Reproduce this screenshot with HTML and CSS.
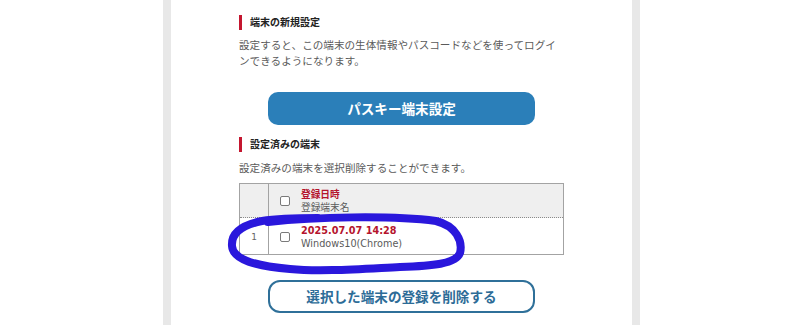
FILE: index.html
```html
<!DOCTYPE html>
<html lang="ja">
<head>
<meta charset="utf-8">
<title>パスキー端末設定</title>
<link rel="stylesheet" href="styles.css">
</head>
<body>
<div class="page">
  <main class="panel">
    <h2 class="heading">端末の新規設定</h2>
    <p class="desc">設定すると、この端末の生体情報やパスコードなどを使ってログインできるようになります。</p>
    <button class="btn btn-primary" type="button">パスキー端末設定</button>

    <h2 class="heading heading-second">設定済みの端末</h2>
    <p class="desc desc-second">設定済みの端末を選択削除することができます。</p>
    <table class="devices">
      <thead>
        <tr>
          <th class="num"></th>
          <th class="info">
            <div class="info-inner">
              <span class="cb"></span>
              <div class="lines">
                <span class="date">登録日時</span>
                <span class="name">登録端末名</span>
              </div>
            </div>
          </th>
        </tr>
      </thead>
      <tbody>
        <tr>
          <td class="num">1</td>
          <td class="info">
            <div class="info-inner">
              <span class="cb"></span>
              <div class="lines">
                <span class="date">2025.07.07 14:28</span>
                <span class="name">Windows10(Chrome)</span>
              </div>
            </div>
          </td>
        </tr>
      </tbody>
    </table>
    <button class="btn btn-outline" type="button">選択した端末の登録を削除する</button>
  </main>
  <svg class="annotation" viewBox="0 0 800 325" width="800" height="325" aria-hidden="true">
    <path d="M 268 222 C 315 217, 390 215, 436 221 C 456 226, 463 241, 460 253 C 456 264, 432 266, 400 267 C 360 269, 320 272, 290 269 C 256 266, 233 260, 232 246 C 231 233, 242 225, 262 221 C 280 218, 300 218, 318 218" />
  </svg>
</div>
</body>
</html>
```

FILE: styles.css
```css
* {
  box-sizing: border-box;
}

html, body {
  margin: 0;
  padding: 0;
  background: #ffffff;
}

body {
  font-family: "DejaVu Sans", "Noto Sans CJK JP", sans-serif;
  color: #333333;
  height: 325px;
  overflow: hidden;
}

.page {
  position: relative;
  width: 800px;
  height: 325px;
}

.panel {
  margin-left: 163px;
  width: 477px;
  height: 325px;
  border-left: 8px solid #e8e8e8;
  border-right: 8px solid #e8e8e8;
  background: #ffffff;
  padding: 15px 68px 0 68px;
  display: flex;
  flex-direction: column;
}

.heading {
  margin: 0;
  height: 15px;
  line-height: 15px;
  font-size: 10px;
  font-weight: bold;
  color: #222222;
  border-left: 3px solid #c4162f;
  padding-left: 8px;
}

.heading-second {
  margin-top: 12px;
}

.desc {
  margin: 7px 0 0 0;
  font-size: 10.6px;
  line-height: 16px;
  color: #5a5a5a;
  font-family: "Noto Sans CJK JP", sans-serif;
}

.desc-second {
  margin-top: 8px;
}

.btn {
  display: block;
  width: 267px;
  height: 33px;
  margin: 23px auto 0 auto;
  font-family: "Noto Sans CJK JP", sans-serif;
  font-size: 13.6px;
  font-weight: bold;
  line-height: 1;
  padding: 0;
  cursor: pointer;
}

.btn-primary {
  background: #2b7fb9;
  color: #ffffff;
  border: none;
  border-radius: 10px;
}

.btn-outline {
  margin-top: 25px;
  background: #ffffff;
  color: #2d6c97;
  border: 2px solid #2f7099;
  border-radius: 12px;
}

.devices {
  margin-top: 7px;
  width: 325px;
  border-collapse: collapse;
  border: 1px solid #a3a3a3;
  font-size: 9.7px;
}

.devices thead tr {
  background: #efefef;
}

.devices tbody tr {
  background: #ffffff;
  border-top: 1px dotted #8a8a8a;
}

.devices th,
.devices td {
  text-align: left;
  font-weight: normal;
  vertical-align: middle;
}

.devices thead th {
  padding: 4px 0 3px 0;
}

.devices tbody td {
  padding: 6px 0 4px 0;
}

.devices .num {
  width: 29px;
  border-right: 1px solid #a3a3a3;
  text-align: center;
  color: #666666;
  font-size: 9px;
}

.info-inner {
  display: flex;
  align-items: center;
  padding-left: 11px;
  gap: 11px;
}

.cb {
  display: block;
  width: 10px;
  height: 10px;
  border: 1px solid #7a7a7a;
  border-radius: 2px;
  background: #ffffff;
  flex: none;
}

.lines {
  display: flex;
  flex-direction: column;
  line-height: 13px;
}

.date {
  color: #b5142d;
  font-weight: bold;
}

.name {
  color: #5a5a5a;
}

.annotation {
  position: absolute;
  top: 0;
  left: 0;
  pointer-events: none;
}

.annotation path {
  fill: none;
  stroke: #2a17dc;
  stroke-width: 8;
  stroke-linecap: round;
  stroke-linejoin: round;
}
```
